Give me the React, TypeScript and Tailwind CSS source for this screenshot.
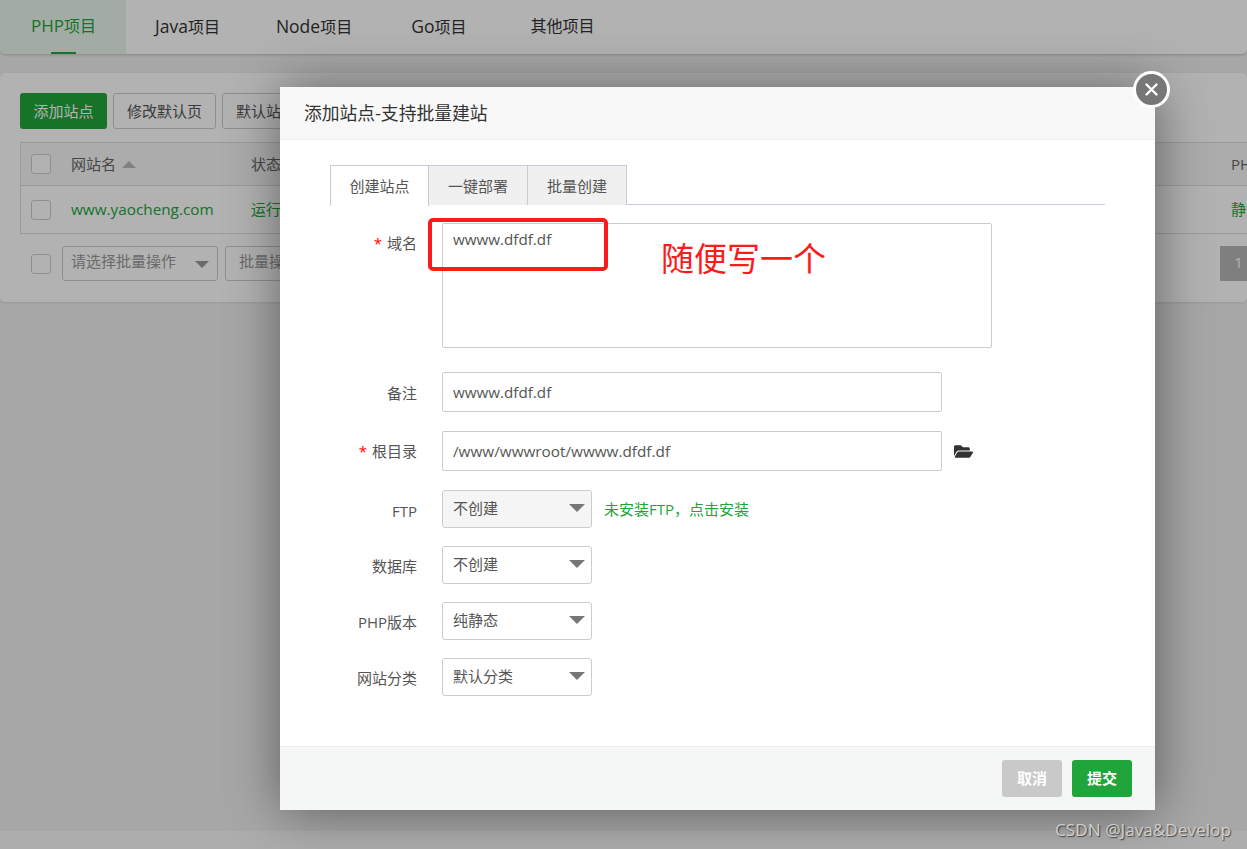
import React from 'react';
import { FaFolderOpen } from 'react-icons/fa';

const fontClass = "font-['Open_Sans','Noto_Sans_CJK_SC',sans-serif]";

const Check = () => <span className="block h-5 w-5 shrink-0 rounded-[3px] border border-[#ccc] bg-white" />;

const Caret = () => (
  <span className="absolute right-[6px] top-[13px] h-0 w-0 border-x-[8px] border-t-[8px] border-x-transparent border-t-[#777]" />
);

const Select = ({ value, gray }: { value: string; gray?: boolean }) => (
  <div
    className={`relative h-[38px] w-[150px] rounded-[3px] border border-[#ccc] pl-[10px] text-[15px] leading-[34px] text-[#555] ${
      gray ? 'bg-[#f5f5f5]' : 'bg-white'
    }`}
  >
    {value}
    <Caret />
  </div>
);

// one row of the add-site form
const Row = ({
  label,
  required,
  children,
  className = '',
  labelClass = '',
}: {
  label: string;
  required?: boolean;
  children: React.ReactNode;
  className?: string;
  labelClass?: string;
}) => (
  <div className={`flex ${className}`}>
    <div className={`w-[87px] shrink-0 text-right text-[15px] leading-[20px] text-[#555] ${labelClass}`}>
      {required && <span className="mr-[5px] text-[#f00]">*</span>}
      {label}
    </div>
    <div className="ml-[25px] flex items-center">{children}</div>
  </div>
);

const tabClass = 'h-[40px] text-[15px] leading-[40px] text-[#555] text-center';

const Page = () => (
  <div className="flex h-full flex-col bg-[#f0f0f0]">
    {/* top project tabs */}
    <div className="flex h-[54px] shrink-0 rounded-b-[5px] bg-white text-base text-[#333] shadow-[0_1px_3px_rgba(0,0,0,0.2)]">
      <div className="relative w-[126px] rounded-bl-[5px] bg-[#e9f6ec] pl-[31px] leading-[52px] text-[#20a53a]">
        <span className="text-[17px]">PHP</span>项目
        <span className="absolute bottom-0 left-[51px] h-[2px] w-[25px] bg-[#20a53a]" />
      </div>
      <div className="ml-[29px] leading-[52px]"><span className="text-[17.5px]">Java</span>项目</div>
      <div className="ml-[56px] leading-[52px]"><span className="text-[17.5px]">Node</span>项目</div>
      <div className="ml-[59px] leading-[52px]"><span className="text-[17.5px]">Go</span>项目</div>
      <div className="ml-[64px] leading-[52px]">其他项目</div>
    </div>

    {/* site list card */}
    <div className="mt-[19px] h-[229px] shrink-0 overflow-hidden rounded-[5px] bg-white pl-5 pt-5 shadow-[0_1px_3px_rgba(0,0,0,0.1)]">
      <div className="flex gap-[6px] text-[15px]">
        <div className="h-9 w-[87px] rounded-[3px] bg-[#20a53a] text-center leading-9 text-white">添加站点</div>
        <div className="h-9 w-[103px] rounded-[3px] border border-[#ccc] text-center leading-[34px] text-[#555]">修改默认页</div>
        <div className="h-9 w-[103px] rounded-[3px] border border-[#ccc] pl-[13px] leading-[34px] text-[#555]">默认站点</div>
      </div>
      <div className="mt-[13px] w-[1280px] border border-[#ddd] text-[15px]">
        <div className="flex h-[43px] items-center border-b border-[#ddd] bg-[#f6f6f6] pl-[10px] text-[#666]">
          <Check />
          <div className="ml-5 flex w-[180px] items-center gap-[6px]">
            网站名
            <span className="h-0 w-0 border-x-[7px] border-b-[7px] border-x-transparent border-b-[#bbb]" />
          </div>
          <div className="w-[980px]">状态</div>
          <div>PHP</div>
        </div>
        <div className="flex h-[47px] items-center pl-[10px] text-[#20a53a]">
          <Check />
          <div className="ml-5 w-[180px] text-[15.3px]">www.yaocheng.com</div>
          <div className="w-[980px]">运行中</div>
          <div>静态</div>
        </div>
      </div>
      <div className="mt-3 flex h-[35px] w-[1237px] items-center pl-[11px] text-[15px] text-[#999]">
        <Check />
        <div className="relative ml-[11px] h-[35px] w-[156px] rounded-[3px] border border-[#ccc] pl-2 leading-[29px]">
          请选择批量操作
          <span className="absolute right-[8px] top-[14px] h-0 w-0 border-x-[7px] border-t-[7px] border-x-transparent border-t-[#999]" />
        </div>
        <div className="ml-[7px] h-[35px] w-[100px] rounded-[3px] border border-[#ccc] pl-[13px] leading-[29px]">批量操作</div>
        <div className="ml-auto h-[35px] w-[37px] bg-[#b7b7b7] text-center leading-[33px] text-white">1</div>
      </div>
    </div>

    <div className="flex-1" />
    <div className="h-[18px] shrink-0 bg-[#f8f8f8]" />
  </div>
);

const Modal = () => (
  <div className="absolute left-[280px] top-[87px] flex h-[723px] w-[875px] flex-col bg-white shadow-[1px_1px_50px_rgba(0,0,0,0.45)]">
    <div className="h-[53px] shrink-0 border-b border-[#eee] bg-[#f8f8f8] pl-6 text-[17.8px] leading-[52px] text-[#333]">
      添加站点-支持批量建站
    </div>
    <div className="absolute -right-[15px] -top-[16px] flex h-[37px] w-[37px] items-center justify-center rounded-full border-[3px] border-white bg-[#777]">
      <svg width="17" height="17" viewBox="0 0 17 17">
        <path d="M3.5 3.5l10 10M13.5 3.5l-10 10" stroke="#fff" strokeWidth="2.4" strokeLinecap="round" />
      </svg>
    </div>

    <div className="flex-1 pl-[50px] pr-[50px] pt-[25px]">
      <div className="flex h-[40px] border-b border-[#cbc9d9]">
        <div className={`${tabClass} -mb-px h-[41px] w-[99px] border-x border-t border-[#cbc9d9] bg-white`}>创建站点</div>
        <div className={`${tabClass} w-[99px] border-r border-t border-[#cbc9d9] bg-[#f0f0f0]`}>一键部署</div>
        <div className={`${tabClass} w-[99px] border-r border-t border-[#cbc9d9] bg-[#f0f0f0]`}>批量创建</div>
      </div>

      <Row label="域名" required className="mt-[18px] items-start" labelClass="pt-[10px]">
        <div className="h-[125px] w-[550px] rounded-[2px] border border-[#ccc] pl-[10px] pt-1 text-[15.2px] leading-[22px] text-[#555]">
          wwww.dfdf.df
        </div>
      </Row>
      <Row label="备注" className="mt-6 items-center" labelClass="pt-[2px]">
        <div className="h-10 w-[500px] rounded-[2px] border border-[#ccc] pl-[10px] text-[15.2px] leading-[38px] text-[#555]">wwww.dfdf.df</div>
      </Row>
      <Row label="根目录" required className="mt-[19px] items-center">
        <div className="h-10 w-[500px] rounded-[2px] border border-[#ccc] pl-[10px] text-[15.3px] leading-[38px] text-[#555]">/www/wwwroot/wwww.dfdf.df</div>
        <FaFolderOpen className="ml-[12px] text-[19px] text-[#333]" />
      </Row>
      <Row label="FTP" className="mt-[19px] items-center" labelClass="pt-1">
        <Select value="不创建" gray />
        <a className="ml-3 text-[15px] text-[#20a53a]">未安装FTP，点击安装</a>
      </Row>
      <Row label="数据库" className="mt-[18px] items-center" labelClass="pt-[2px]">
        <Select value="不创建" />
      </Row>
      <Row label="PHP版本" className="mt-[18px] items-center" labelClass="pt-[2px]">
        <Select value="纯静态" />
      </Row>
      <Row label="网站分类" className="mt-[18px] items-center" labelClass="pt-[2px]">
        <Select value="默认分类" />
      </Row>
    </div>

    <div className="flex h-[64px] shrink-0 items-center justify-end gap-[10px] border-t border-[#eee] bg-[#f5f7f7] pr-[23px] text-[15px] font-bold text-white">
      <div className="h-[37px] w-[60px] rounded-[3px] bg-[#c9c9c9] text-center leading-[37px]">取消</div>
      <div className="h-[37px] w-[60px] rounded-[3px] bg-[#20a53a] text-center leading-[37px]">提交</div>
    </div>
  </div>
);

export default function App() {
  return (
    <div className={`relative h-[849px] w-[1247px] overflow-hidden ${fontClass}`}>
      <Page />
      {/* dim layer */}
      <div className="absolute inset-0 bg-black/30" />
      <Modal />

      {/* red annotation drawn on top of the shot */}
      <div className="absolute left-[428px] top-[218px] h-[53px] w-[180px] rounded-[5px] border-[4px] border-[#fb1b1b]" />
      <div className="absolute left-[661px] top-[235px] text-[33px] leading-[48px] text-[#fb1b1b]">随便写一个</div>

      <div className="absolute left-[1055px] top-[819px] text-[17.2px] leading-[22px] text-[#d0d0d0] [text-shadow:1px_1px_1px_rgba(0,0,0,0.6)]">
        CSDN @Java&amp;Develop
      </div>
    </div>
  );
}
